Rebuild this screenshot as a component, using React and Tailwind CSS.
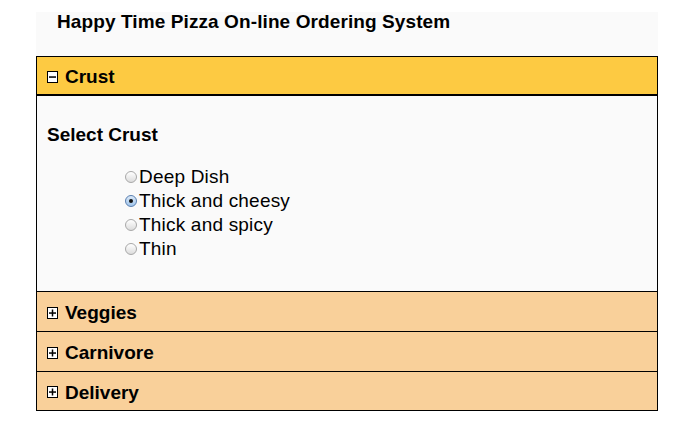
import {useState} from "react";

const sections = ["Crust", "Veggies", "Carnivore", "Delivery"];
const crusts = ["Deep Dish", "Thick and cheesy", "Thick and spicy", "Thin"];

function ToggleIcon({open}) {
  return (
    <svg width="11" height="12" viewBox="0 0 11 12" className="shrink-0">
      <rect x="0.5" y="0.5" width="10" height="11" fill="#fff" stroke="#000" />
      <rect x="2" y="5.3" width="7" height="1.5" fill="#000" />
      {!open && <rect x="4.75" y="2.5" width="1.5" height="7" fill="#000" />}
    </svg>
  );
}

function Radio({checked}) {
  return (
    <span
      className={
        "w-[12px] h-[12px] rounded-full border shrink-0 flex items-center justify-center " +
        (checked
          ? "border-[#5a7fb0] bg-gradient-to-b from-[#dbe9f8] to-[#9fc4ea]"
          : "border-[#a8a8a8] bg-gradient-to-b from-[#ffffff] to-[#dcdcdc]")
      }
    >
      {checked && <span className="w-[4px] h-[4px] rounded-full bg-[#111]" />}
    </span>
  );
}

export default function App() {
  const [open, setOpen] = useState("Crust");
  const [crust, setCrust] = useState("Thick and cheesy");

  return (
    <div className="min-h-screen bg-white font-['Liberation_Sans',Arial,sans-serif] text-black">
      <div className="ml-[36px] mt-[12px] w-[622px] bg-[#fafafa]">
        <h1 className="h-[44px] pl-[21px] text-[19px] leading-[19px] font-bold tracking-[0.1px]">
          Happy Time Pizza On-line Ordering System
        </h1>

        <div className="border-x border-b border-black">
          {sections.map((s, i) => {
            const isOpen = open === s;
            const last = i === sections.length - 1;
            return (
              <div key={s}>
                <button
                  onClick={() => setOpen(isOpen ? null : s)}
                  className={
                    "w-full flex items-center gap-[7px] pl-[10px] pt-[2px] border-t border-black text-left text-[19px] font-bold " +
                    (isOpen ? "bg-[#fdca42] border-b-2 " : "bg-[#f9d09a] ") +
                    (last ? "h-[39px]" : "h-[40px]")
                  }
                >
                  <ToggleIcon open={isOpen} />
                  <span className="leading-[19px]">{s}</span>
                </button>

                {isOpen && s === "Crust" && (
                  <div className="h-[195px] pt-[29px] pl-[10px] bg-[#fafafa]">
                    <p className="text-[19px] leading-[19px] font-bold">Select Crust</p>
                    <div className="mt-[21px] ml-[78px] flex flex-col">
                      {crusts.map((c) => (
                        <label
                          key={c}
                          onClick={() => setCrust(c)}
                          className="h-[24px] flex items-center gap-[2px] text-[19px] tracking-[0.2px] cursor-pointer"
                        >
                          <Radio checked={crust === c} />
                          <span>{c}</span>
                        </label>
                      ))}
                    </div>
                  </div>
                )}
              </div>
            );
          })}
        </div>
      </div>
    </div>
  );
}
